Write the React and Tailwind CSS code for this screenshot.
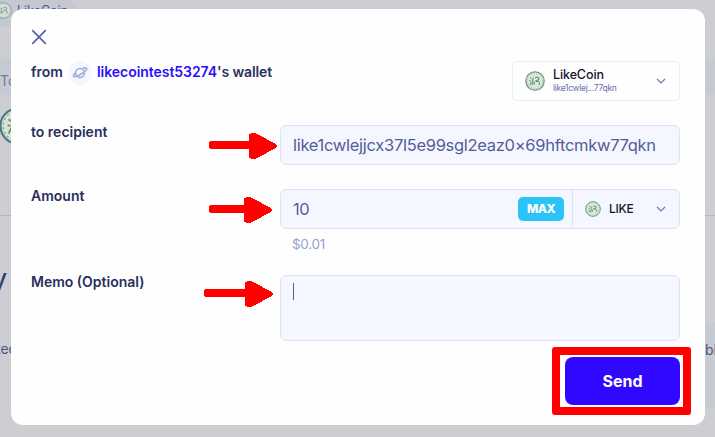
import React from "react";

function Coin({ className, ring = "#6a938f" }) {
  return (
    <svg viewBox="0 0 40 40" className={className} fill="none">
      <circle cx="20" cy="20" r="18.5" fill="#c9dfcd" stroke={ring} strokeWidth="2.2" />
      <circle cx="20" cy="20" r="15.5" fill="#dce9d2" stroke={ring} strokeOpacity=".6" strokeWidth="1.4" strokeDasharray="2 3" />
      <path
        d="M10 13l3 2M9 19l3 1M10 28l3-6M17 13l-2 5 1 4-2 6M20 14q4-4 8 0l-1 4-6 1M19 21l-1 6M22 21q7-2 7 2l-1 5"
        stroke="#47746f"
        strokeOpacity=".85"
        strokeWidth="2"
      />
    </svg>
  );
}

function Chevron() {
  return (
    <svg viewBox="0 0 10 6" className="mr-[-1px] h-[6px] w-[10px] shrink-0" fill="none">
      <path d="M1 1l4 4 4-4" stroke="#6f7ab5" strokeWidth="1.2" />
    </svg>
  );
}

function Planet() {
  return (
    <svg viewBox="0 0 16 14" className="h-[14px] w-4" fill="none" stroke="#a0a9cf" strokeWidth="1.5">
      <circle cx="8" cy="7" r="4.4" />
      <path d="M10.800 2.500c2-.8 3.400-.9 3.800-.2.700 1.200-1.800 3.600-5.400 5.700S2.100 11.400 1.500 10.300c-.4-.7.400-1.900 1.900-3.200" />
    </svg>
  );
}

function Field({ label, children, className = "" }) {
  return (
    <div className={`flex items-start ${className}`}>
      <div className="-mt-1 w-[249px] shrink-0 text-[14px] leading-[21px] font-semibold text-[#28305b]">{label}</div>
      {children}
    </div>
  );
}

function Arrow({ length, className }) {
  const h = length - 28;
  return (
    <svg width={length} height="26" className={`absolute ${className}`} fill="#ff0000" shapeRendering="crispEdges">
      <rect x="0" y="8" width={h + 4} height="8" rx="3" />
      <path d={`M${h} 3q0-3 4-3q3 0 6 2l15 8q3 1 3 3t-3 3l-15 8q-3 2-6 2q-4 0-4-3z`} />
    </svg>
  );
}

function Backdrop() {
  return (
    <div className="flex h-full flex-col text-[14px] whitespace-nowrap text-[#4d5489]">
      <div className="flex h-[27px] w-[78px] items-start rounded-r-[14px] bg-[#c5c8d2]">
        <Coin className="mt-[2px] -ml-[5px] h-[17px] w-[17px] shrink-0 opacity-75" />
        <span className="ml-[5px] pt-[2px] text-[12.5px] leading-[18px]">LikeCoin</span>
      </div>
      <div className="mt-8 flex h-9 items-center bg-[#c5c9d1] pt-[6px] text-[#777d9e]">To</div>
      <div className="h-[120px] pt-[12px]">
        <Coin ring="#2f6a6d" className="-ml-px h-[38px] w-[38px] opacity-85" />
      </div>
      <div className="h-px bg-[#b3b4c9]" />
      <div className="-ml-[9px] mt-[45px] h-[61px] text-[29px] leading-[36px] text-[#343e73]">y</div>
      <div className="flex h-[86px] items-start justify-between overflow-hidden">
        <span className="-ml-[4px] pt-[16px] leading-[21px]">ted</span>
        <span className="h-[86px] w-[10px] bg-[#c7cad0] pt-[17px] leading-[21px]">ble</span>
      </div>
    </div>
  );
}

export default function App() {
  return (
    <div className="relative h-[437px] w-[715px] overflow-hidden bg-[#cdced2] font-['Inter','Liberation_Sans',sans-serif]">
      <Backdrop />
      <main className="absolute left-[11px] top-[9px] flex h-[416px] w-[694px] flex-col rounded-[12px] bg-[#fefefe] pl-5 pr-[25px] whitespace-nowrap">
        <button className="mt-5 h-4 w-4" aria-label="Close">
          <svg viewBox="0 0 16 16" className="h-4 w-4" fill="none">
            <path d="M1.200 1.200l13.600 13.600M14.800 1.200L1.200 14.800" stroke="#5966ac" strokeWidth="1.800" />
          </svg>
        </button>
        <div className="mt-4 flex h-10 justify-between">
          <div className="flex h-6 items-center text-[14px] leading-[20px] font-semibold text-[#28305b]">
            <span className="w-[33px] pb-[2px]">from</span>
            <span className="ml-1 flex h-6 w-6 items-center justify-center rounded-full bg-[#f4f7ff]"><Planet /></span>
            <span className="ml-[5px] w-[120px] pb-[2px] tracking-[-0.05px] text-[#2b0ffb]">likecointest53274</span>
            <span className="pb-[2px] tracking-[-0.1px]">'s wallet</span>
          </div>
          <div className="flex w-[168px] items-center rounded-[4px] border border-[#e8ecfa] pl-3 pr-[14px]">
            <Coin className="h-5 w-5 shrink-0" />
            <div className="ml-2 flex-1">
              <div className="text-[12.5px] leading-[14px] tracking-[-0.1px] font-medium text-[#16142f]">LikeCoin</div>
              <div className="text-[8.5px] leading-[12px] tracking-[-0.3px] text-[#6670ad]">like1cwlej...77qkn</div>
            </div>
            <Chevron />
          </div>
        </div>

        <Field label="to recipient" className="mt-6 h-10">
          <div className="flex h-10 w-[400px] items-center rounded-[6px] border border-[#dde2f8] bg-[#f4f7ff] pl-3 text-[16.5px] tracking-[-0.29px] text-[#555d99]">
            like1cwlejjcx37l5e99sgl2eaz0×69hftcmkw77qkn
          </div>
        </Field>

        <Field label="Amount" className="mt-6 h-[64px]">
          <div className="w-[400px]">
            <div className="flex h-10 items-center rounded-[6px] border border-[#dde2f8] bg-[#f4f7ff] pl-3">
              <div className="flex-1 text-[16.5px] tracking-[-0.5px] text-[#555d99]">10</div>
              <button className="mr-2 flex h-6 w-[46px] items-center justify-center rounded-[5px] bg-[#2cc4f7] text-[12px] tracking-[-0.6px] font-extrabold text-white">
                MAX
              </button>
              <div className="flex h-full w-[107px] items-center border-l border-[#dde2f8] pl-3 pr-[14px]">
                <Coin className="h-4 w-4 shrink-0" />
                <div className="ml-2 flex-1 text-[12px] tracking-[-0.3px] font-medium text-[#16142f]">LIKE</div>
                <Chevron />
              </div>
            </div>
            <div className="ml-3 mt-[5px] text-[13.5px] leading-[20px] tracking-[-0.3px] text-[#99a1d0]">$0.01</div>
          </div>
        </Field>

        <Field label="Memo (Optional)" className="mt-[22px] h-[66px]">
          <div className="h-[66px] w-[400px] rounded-[6px] border border-[#dde2f8] bg-[#f4f7ff] pl-3 pt-[7px]">
            <div className="h-[17px] w-px bg-[#555d99]" />
          </div>
        </Field>

        <button className="mt-4 flex h-12 w-[115px] items-center justify-center self-end rounded-[8px] bg-[#3008ff] pb-[1px] text-[16px] font-bold text-white">
          Send
        </button>
      </main>
      <Arrow length={68} className="left-[209px] top-[133px]" />
      <Arrow length={63} className="left-[209px] top-[197px]" />
      <Arrow length={69} className="left-[204px] top-[281px]" />
      <div className="absolute left-[552px] top-[347px] h-[68px] w-[139px] rounded-[3px] border-8 border-[#ff0000]" />
    </div>
  );
}
